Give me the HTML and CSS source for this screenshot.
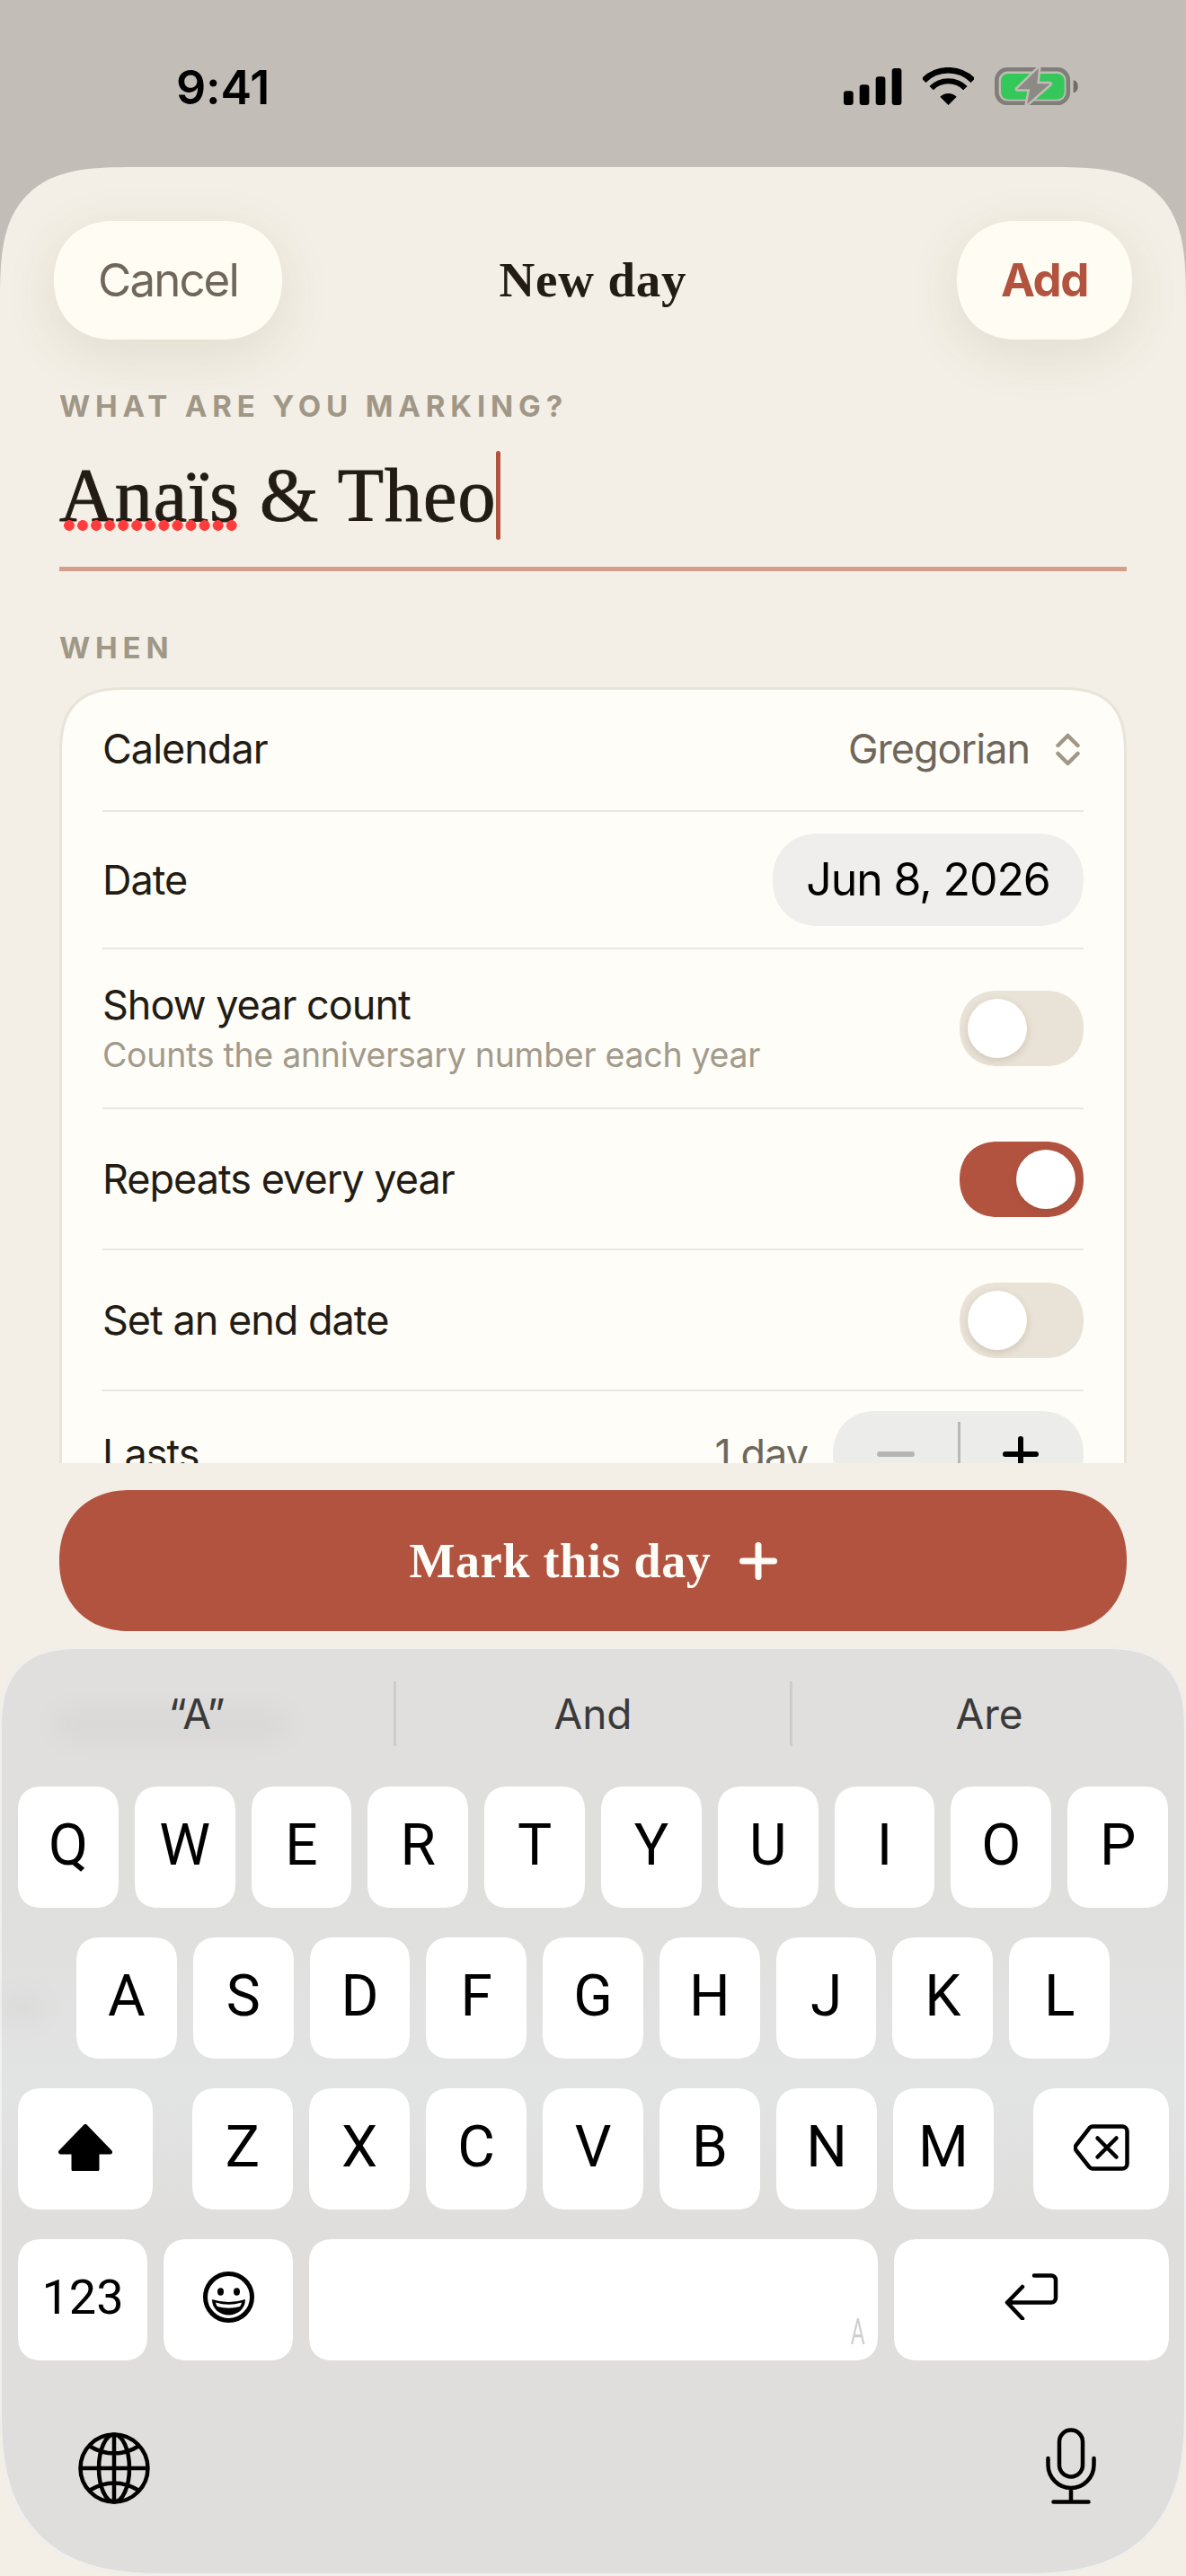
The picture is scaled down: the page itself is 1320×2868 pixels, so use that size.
FILE: index.html
```html
<!DOCTYPE html>
<html lang="en">
<head>
<meta charset="utf-8">
<title>New day</title>
<link rel="stylesheet" href="styles.css">
</head>
<body>
<div class="phone">
  <header class="status">
    <span class="clock">9:41</span>
    <div class="status-icons">
      <svg class="ic-signal" viewBox="0 0 65 41"><rect x="0" y="25.3" width="10.7" height="15.7" rx="3.2"/><rect x="17.7" y="18.3" width="10.7" height="22.7" rx="3.2"/><rect x="35.7" y="9.3" width="10.7" height="31.7" rx="3.2"/><rect x="53.7" y="0" width="10.7" height="41" rx="3.2"/></svg>
      <svg class="ic-wifi" viewBox="0 0 57 42"><path class="wifi-arc" d="M1.1 14.6A38.7 38.7 0 0 1 55.9 14.6"/><path class="wifi-arc mid" d="M9.6 23.1A26.7 26.7 0 0 1 47.4 23.1"/><path d="M28.5 42L19.3 32.8A13 13 0 0 1 37.7 32.8Z"/></svg>
      <svg class="ic-batt" viewBox="0 0 93 42"><rect class="batt-body" x="2.3" y="2.3" width="79.5" height="37.5" rx="12"/><rect class="batt-fill" x="7" y="7" width="70.7" height="28.7" rx="8"/><path class="batt-nub" d="M87.7 14.3c3.4.6 5 3.4 5 6.9s-1.6 6.400-5 7Z"/><path class="batt-bolt" d="M49 1L25 24.300H39.300L36 41L61.700 18.300H47.300Z"/></svg>
    </div>
  </header>

  <main class="sheet">
    <nav class="nav">
      <button class="pill pill-cancel">Cancel</button>
      <h1 class="nav-title">New day</h1>
      <button class="pill pill-add">Add</button>
    </nav>

    <div class="form">
      <div class="label label-what">WHAT ARE YOU MARKING?</div>
      <div class="field"><span class="field-text"><span class="misspelled">Anaïs</span> &amp; Theo</span><i class="caret"></i></div>
      <div class="label label-when">WHEN</div>

      <section class="card">
        <div class="row row-calendar">
          <span class="row-title">Calendar</span>
          <span class="row-value">Gregorian<svg class="ic-chev" viewBox="0 0 27 37"><path d="M2.500 14L13.500 3L24.500 14M2.500 23L13.500 34L24.500 23"/></svg></span>
        </div>
        <div class="row row-date">
          <span class="row-title">Date</span>
          <span class="date-pill">Jun 8, 2026</span>
        </div>
        <div class="row row-sub">
          <div class="row-stack">
            <span class="row-title">Show year count</span>
            <span class="row-note">Counts the anniversary number each year</span>
          </div>
          <span class="toggle"><i class="knob"></i></span>
        </div>
        <div class="row row-toggle">
          <span class="row-title">Repeats every year</span>
          <span class="toggle on"><i class="knob"></i></span>
        </div>
        <div class="row row-toggle">
          <span class="row-title">Set an end date</span>
          <span class="toggle"><i class="knob"></i></span>
        </div>
        <div class="row row-last">
          <span class="row-title">Lasts</span>
          <div class="lasts">
            <span class="row-value">1 day</span>
            <div class="stepper">
              <span class="step"><i class="minus"></i></span>
              <span class="step step-plus"><svg class="ic-plus" viewBox="0 0 40 40"><path d="M3 20H37M20 3V37"/></svg></span>
            </div>
          </div>
        </div>
      </section>
    </div>

    <div class="cta-wrap">
      <button class="cta"><span>Mark this day</span><svg class="ic-cta-plus" viewBox="0 0 42 42"><path d="M3.500 21H38.500M21 3.500V38.500"/></svg></button>
    </div>

    <section class="keyboard">
      <i class="smudge"></i>
      <i class="smudge smudge-side"></i>
      <div class="suggest">
        <span class="sug">“A”</span>
        <span class="sug">And</span>
        <span class="sug">Are</span>
      </div>
      <div class="kb-rows">
        <div class="kb-row kb-row-1">
          <span class="key">Q</span><span class="key">W</span><span class="key">E</span><span class="key">R</span><span class="key">T</span><span class="key">Y</span><span class="key">U</span><span class="key">I</span><span class="key">O</span><span class="key">P</span>
        </div>
        <div class="kb-row kb-row-2">
          <span class="key">A</span><span class="key">S</span><span class="key">D</span><span class="key">F</span><span class="key">G</span><span class="key">H</span><span class="key">J</span><span class="key">K</span><span class="key">L</span>
        </div>
        <div class="kb-row kb-row-3">
          <span class="key key-mod">
            <svg class="ic-shift" viewBox="0 0 60 52"><path d="M30 2.500L2.500 31H17V50H43V31H57.500Z"/></svg>
          </span>
          <div class="kb-letters">
            <span class="key">Z</span><span class="key">X</span><span class="key">C</span><span class="key">V</span><span class="key">B</span><span class="key">N</span><span class="key">M</span>
          </div>
          <span class="key key-mod">
            <svg class="ic-del" viewBox="0 0 62 52"><path d="M21 2.500H54A5.500 5.500 0 0 1 59.500 8V44A5.500 5.500 0 0 1 54 49.500H21A5 5 0 0 1 17.500 47.800L3 29.500A5 5 0 0 1 3 23L17.500 4.300A5 5 0 0 1 21 2.500Z"/><path d="M26.500 15.500L47.500 36.500M47.500 15.500L26.500 36.500"/></svg>
          </span>
        </div>
        <div class="kb-row kb-row-4">
          <span class="key key-bottom key-num">123</span>
          <span class="key key-bottom">
            <svg class="ic-smile" viewBox="0 0 57 57"><circle class="smile-face" cx="28.500" cy="28.500" r="26"/><ellipse cx="19.500" cy="22.500" rx="3.500" ry="4.200"/><ellipse cx="37.500" cy="22.500" rx="3.500" ry="4.200"/><path d="M10 31Q28.500 37 47 31C47 42 38 48.500 28.500 48.500C19 48.500 10 42 10 31Z"/><path class="smile-teeth" d="M14 34.500Q28.500 39 43 34.500Q42.500 37 41 39Q28.500 42.500 16 39Q14.500 37 14 34.500Z"/></svg>
          </span>
          <span class="key key-space"><span class="space-a">A</span></span>
          <span class="key key-return">
            <svg class="ic-return" viewBox="0 0 60 52"><path d="M33 2.500H52A5 5 0 0 1 57 7.500V27.500A5 5 0 0 1 52 32.500H3M20 15L3 32.500L20 50.500"/></svg>
          </span>
        </div>
      </div>
      <div class="kb-tools">
        <svg class="ic-globe" viewBox="0 0 80 80"><ellipse cx="40" cy="40" rx="37.500" ry="37.500"/><ellipse cx="40" cy="40" rx="17" ry="37.500"/><path d="M40 2.500V77.500M2.500 40H77.500M12 15Q40 32 68 15M12 65Q40 48 68 65"/></svg>
        <svg class="ic-mic" viewBox="0 0 56 85"><rect x="15" y="2.500" width="26" height="52" rx="13"/><path d="M2.500 34V41A25.500 26 0 0 0 53.500 41V34M28 67V82.500M8.500 82.500H47.500"/></svg>
      </div>
    </section>
  </main>
</div>
</body>
</html>
```

FILE: styles.css
```css
* { box-sizing: border-box; margin: 0; padding: 0; }
html, body { width: 1320px; height: 2868px; overflow: hidden; }
body { font-family: "Inter", "Liberation Sans", sans-serif; color: #221c14; background: #c2bdb6; }
i { display: block; font-style: normal; }
button { border: 0; font: inherit; }

.phone { width: 1320px; height: 2868px; display: flex; flex-direction: column; background: #c2bdb6; }

/* status bar */
.status { height: 186px; flex: none; padding: 68px 0 0 196px; display: flex; align-items: flex-start; }
.clock { font-size: 52px; font-weight: 600; line-height: 60px; color: #000; letter-spacing: -0.2px; }
.status-icons { margin-left: auto; padding-right: 120px; padding-top: 7px; display: flex; align-items: flex-end; }
.ic-signal { width: 65px; height: 41px; fill: #000; margin-right: 23px; }
.ic-wifi { width: 57px; height: 42px; fill: #000; margin-right: 23px; }
.wifi-arc { fill: none; stroke: #000; stroke-width: 6.6; }
.wifi-arc.mid { stroke-width: 6.2; }
.ic-batt { width: 93px; height: 42px; overflow: visible; }
.batt-body { fill: none; stroke: #807e79; stroke-width: 4.6; }
.batt-fill { fill: #34c759; }
.batt-nub { fill: #6f6d69; }
.batt-bolt { fill: #8b8a85; stroke: #c2bdb6; stroke-width: 5; stroke-linejoin: round; paint-order: stroke; }

/* sheet */
.sheet { flex: 1; min-height: 0; display: flex; flex-direction: column; background: #f3efe6; border-radius: 150px 150px 0 0; corner-shape: superellipse(1.6); overflow: hidden; }

.nav { flex: none; padding: 60px 60px 0; display: grid; grid-template-columns: 1fr auto 1fr; align-items: center; position: relative; z-index: 1; }
.pill { height: 132px; border-radius: 66px; corner-shape: superellipse(1.12); background: #fffcf3; box-shadow: 0 15px 60px rgba(90, 70, 40, 0.11); font-size: 51px; line-height: 60px; }
.pill-cancel { justify-self: start; width: 254px; color: #6f675b; font-weight: 400; letter-spacing: -1.9px; }
.pill-add { justify-self: end; width: 195px; color: #b25340; font-weight: 700; letter-spacing: -1.4px; }
.nav-title { font-family: "Liberation Serif", serif; font-size: 55px; line-height: 60px; font-weight: 700; color: #221c14; letter-spacing: 0.8px; }

.form { flex: 1; min-height: 0; overflow: hidden; padding: 62px 66px 0; }
.label { font-size: 33px; line-height: 24px; font-weight: 700; letter-spacing: 5.85px; color: #a09787; }
.field { margin-top: 38px; height: 134px; padding-bottom: 29px; border-bottom: 5px solid #d49e8c; display: flex; align-items: flex-start; }
.field-text { font-family: "Liberation Serif", serif; font-size: 84px; line-height: 100px; color: #221c14; letter-spacing: 1px; -webkit-text-stroke: 1px #221c14; }
.misspelled { position: relative; }
.misspelled::after { content: ""; position: absolute; left: 5px; top: 74px; width: 196px; height: 12px; background: radial-gradient(circle at 6px 6px, #ff3b3b 5.6px, transparent 6.2px) 0 0 / 15.07px 12px repeat-x; }
.caret { width: 5px; height: 99px; margin-left: 0; border-radius: 2.500px; background: #b25340; flex: none; }
.label-when { margin-top: 73px; }

/* card */
.card { margin-top: 32px; padding: 0 45px; background: #fffdf8; border: 3px solid #e9e4da; border-radius: 78px; corner-shape: superellipse(1.5); min-height: 1000px; }
.row { display: flex; align-items: center; justify-content: space-between; border-bottom: 2px solid #e9e7e1; }
.row-calendar { height: 136px; padding-bottom: 2px; }
.row-date { height: 153px; }
.row-sub { height: 178px; }
.row-toggle { height: 157px; }
.row-last { height: 135px; padding-top: 4px; border-bottom: 0; }
.row-title { font-size: 45px; line-height: 54px; color: #221c14; letter-spacing: -1px; }
.row-value { font-size: 45px; line-height: 54px; color: #6f675b; display: flex; align-items: center; letter-spacing: -1px; }
.ic-chev { width: 27px; height: 37px; margin-left: 29px; margin-right: 4px; fill: none; stroke: #a09787; stroke-width: 4.500; stroke-linecap: round; stroke-linejoin: round; }
.date-pill { width: 346px; height: 103px; border-radius: 52px; corner-shape: superellipse(1.12); background: #efeeec; color: #000; font-size: 50px; line-height: 103px; text-align: center; letter-spacing: -1.1px; }
.row-stack { display: flex; flex-direction: column; }
.row-note { font-size: 37.500px; line-height: 48px; color: #a29a8b; margin-top: 5px; letter-spacing: -0.28px; }
.toggle { width: 138px; height: 84px; flex: none; padding: 9px; border-radius: 42px; corner-shape: superellipse(1.12); background: #e9e2d6; display: flex; }
.toggle.on { background: #b25340; justify-content: flex-end; }
.knob { width: 66px; height: 66px; border-radius: 50%; corner-shape: round; background: #fff; box-shadow: 0 3px 9px rgba(80, 60, 30, 0.16); }
.lasts { display: flex; align-items: center; gap: 28px; }
.stepper { width: 279px; height: 96px; border-radius: 48px; corner-shape: superellipse(1.12); background: #ececea; display: flex; }
.step { flex: 1; display: flex; align-items: center; justify-content: center; }
.step-plus { position: relative; }
.step-plus::before { content: ""; position: absolute; left: -1px; top: 12px; bottom: 0; width: 3px; background: #b8b8b6; }
.minus { width: 42px; height: 6px; border-radius: 3px; background: #b5b5b3; }
.ic-plus { width: 40px; height: 40px; fill: none; stroke: #000; stroke-width: 6; stroke-linecap: round; }

/* CTA */
.cta-wrap { flex: none; padding: 30px 66px 0; }
.cta { width: 100%; height: 157px; border-radius: 78px; corner-shape: superellipse(1.12); background: #b25340; color: #fffdf8; display: flex; align-items: center; justify-content: center; gap: 31px; font-family: "Liberation Serif", serif; font-size: 54px; font-weight: 700; letter-spacing: 0.7px; }
.ic-cta-plus { width: 42px; height: 42px; fill: none; stroke: #fffdf8; stroke-width: 7; stroke-linecap: round; }

/* keyboard */
.keyboard { flex: none; position: relative; margin-top: 18px; height: 1033px; margin-bottom: 1px; background: linear-gradient(#e0dfdd 0, #dfdfdd 25%, #e2e3e3 48%, #dfdedd 62%, #dfdedc 100%); border-radius: 90px 90px 185px 185px; corner-shape: superellipse(1.4); box-shadow: inset 0 0 0 2px rgba(255, 255, 255, 0.5); overflow: hidden; font-family: "Roboto", "Liberation Sans", sans-serif; }
.smudge { position: absolute; left: 60px; top: 68px; width: 262px; height: 36px; background: rgba(0, 0, 0, 0.028); border-radius: 18px; filter: blur(14px); }
.smudge-side { left: 0; top: 385px; width: 50px; height: 34px; }
.suggest { position: relative; display: grid; grid-template-columns: 438px 441px 441px; padding-top: 38px; height: 155px; }
.sug { height: 72px; display: flex; align-items: center; justify-content: center; font-family: "Inter", sans-serif; font-size: 46px; color: #3a3a3a; }
.sug + .sug { border-left: 3px solid #cdccca; }
.kb-rows { position: relative; display: flex; flex-direction: column; gap: 33px; }
.kb-row { display: flex; gap: 18px; height: 135px; }
.kb-row-1 { padding: 0 20px; }
.kb-row-2 { padding: 0 85px; }
.kb-row-3 { padding: 0 19px 0 20px; justify-content: space-between; }
.kb-row-4 { padding: 0 19px 0 20px; }
.kb-letters { display: flex; gap: 18px; width: 892px; }
.key { flex: 1; height: 135px; background: #fff; border-radius: 28px; corner-shape: superellipse(1.3); display: flex; align-items: center; justify-content: center; color: #000; font-size: 64px; line-height: 128px; padding-bottom: 3px; }
.key-mod { flex: none; width: 151px; padding-bottom: 0; }
.key-mod:first-child { width: 150px; }
.key-bottom { flex: none; width: 144px; padding-bottom: 0; }
.key-num { font-size: 54px; padding-bottom: 5px; }
.key-space { flex: 1; position: relative; padding: 0; }
.key-return { flex: none; width: 306px; padding: 0; }
.space-a { position: absolute; right: 14px; bottom: 17px; font-size: 41px; line-height: 30px; color: #cfcfcf; transform: scaleX(0.6); transform-origin: right center; }

.ic-shift { width: 60px; height: 52px; margin-top: -4px; fill: #000; stroke: #000; stroke-width: 5; stroke-linejoin: round; }
.ic-del { width: 62px; height: 52px; margin-top: -4px; fill: none; stroke: #000; stroke-width: 4.500; stroke-linecap: round; stroke-linejoin: round; }
.ic-smile { width: 57px; height: 57px; margin-top: -7px; fill: #000; }
.smile-face { fill: none; stroke: #000; stroke-width: 5; }
.smile-teeth { fill: #fff; }
.ic-return { width: 60px; height: 52px; margin-top: -7px; fill: none; stroke: #000; stroke-width: 4.500; stroke-linecap: round; stroke-linejoin: round; }

.kb-tools { position: relative; padding: 74px 100px 0 87px; display: flex; justify-content: space-between; align-items: center; }
.ic-globe { width: 80px; height: 80px; margin-top: 6px; fill: none; stroke: #000; stroke-width: 4.500; }
.ic-mic { width: 56px; height: 85px; fill: none; stroke: #000; stroke-width: 4.500; stroke-linecap: round; }
```
